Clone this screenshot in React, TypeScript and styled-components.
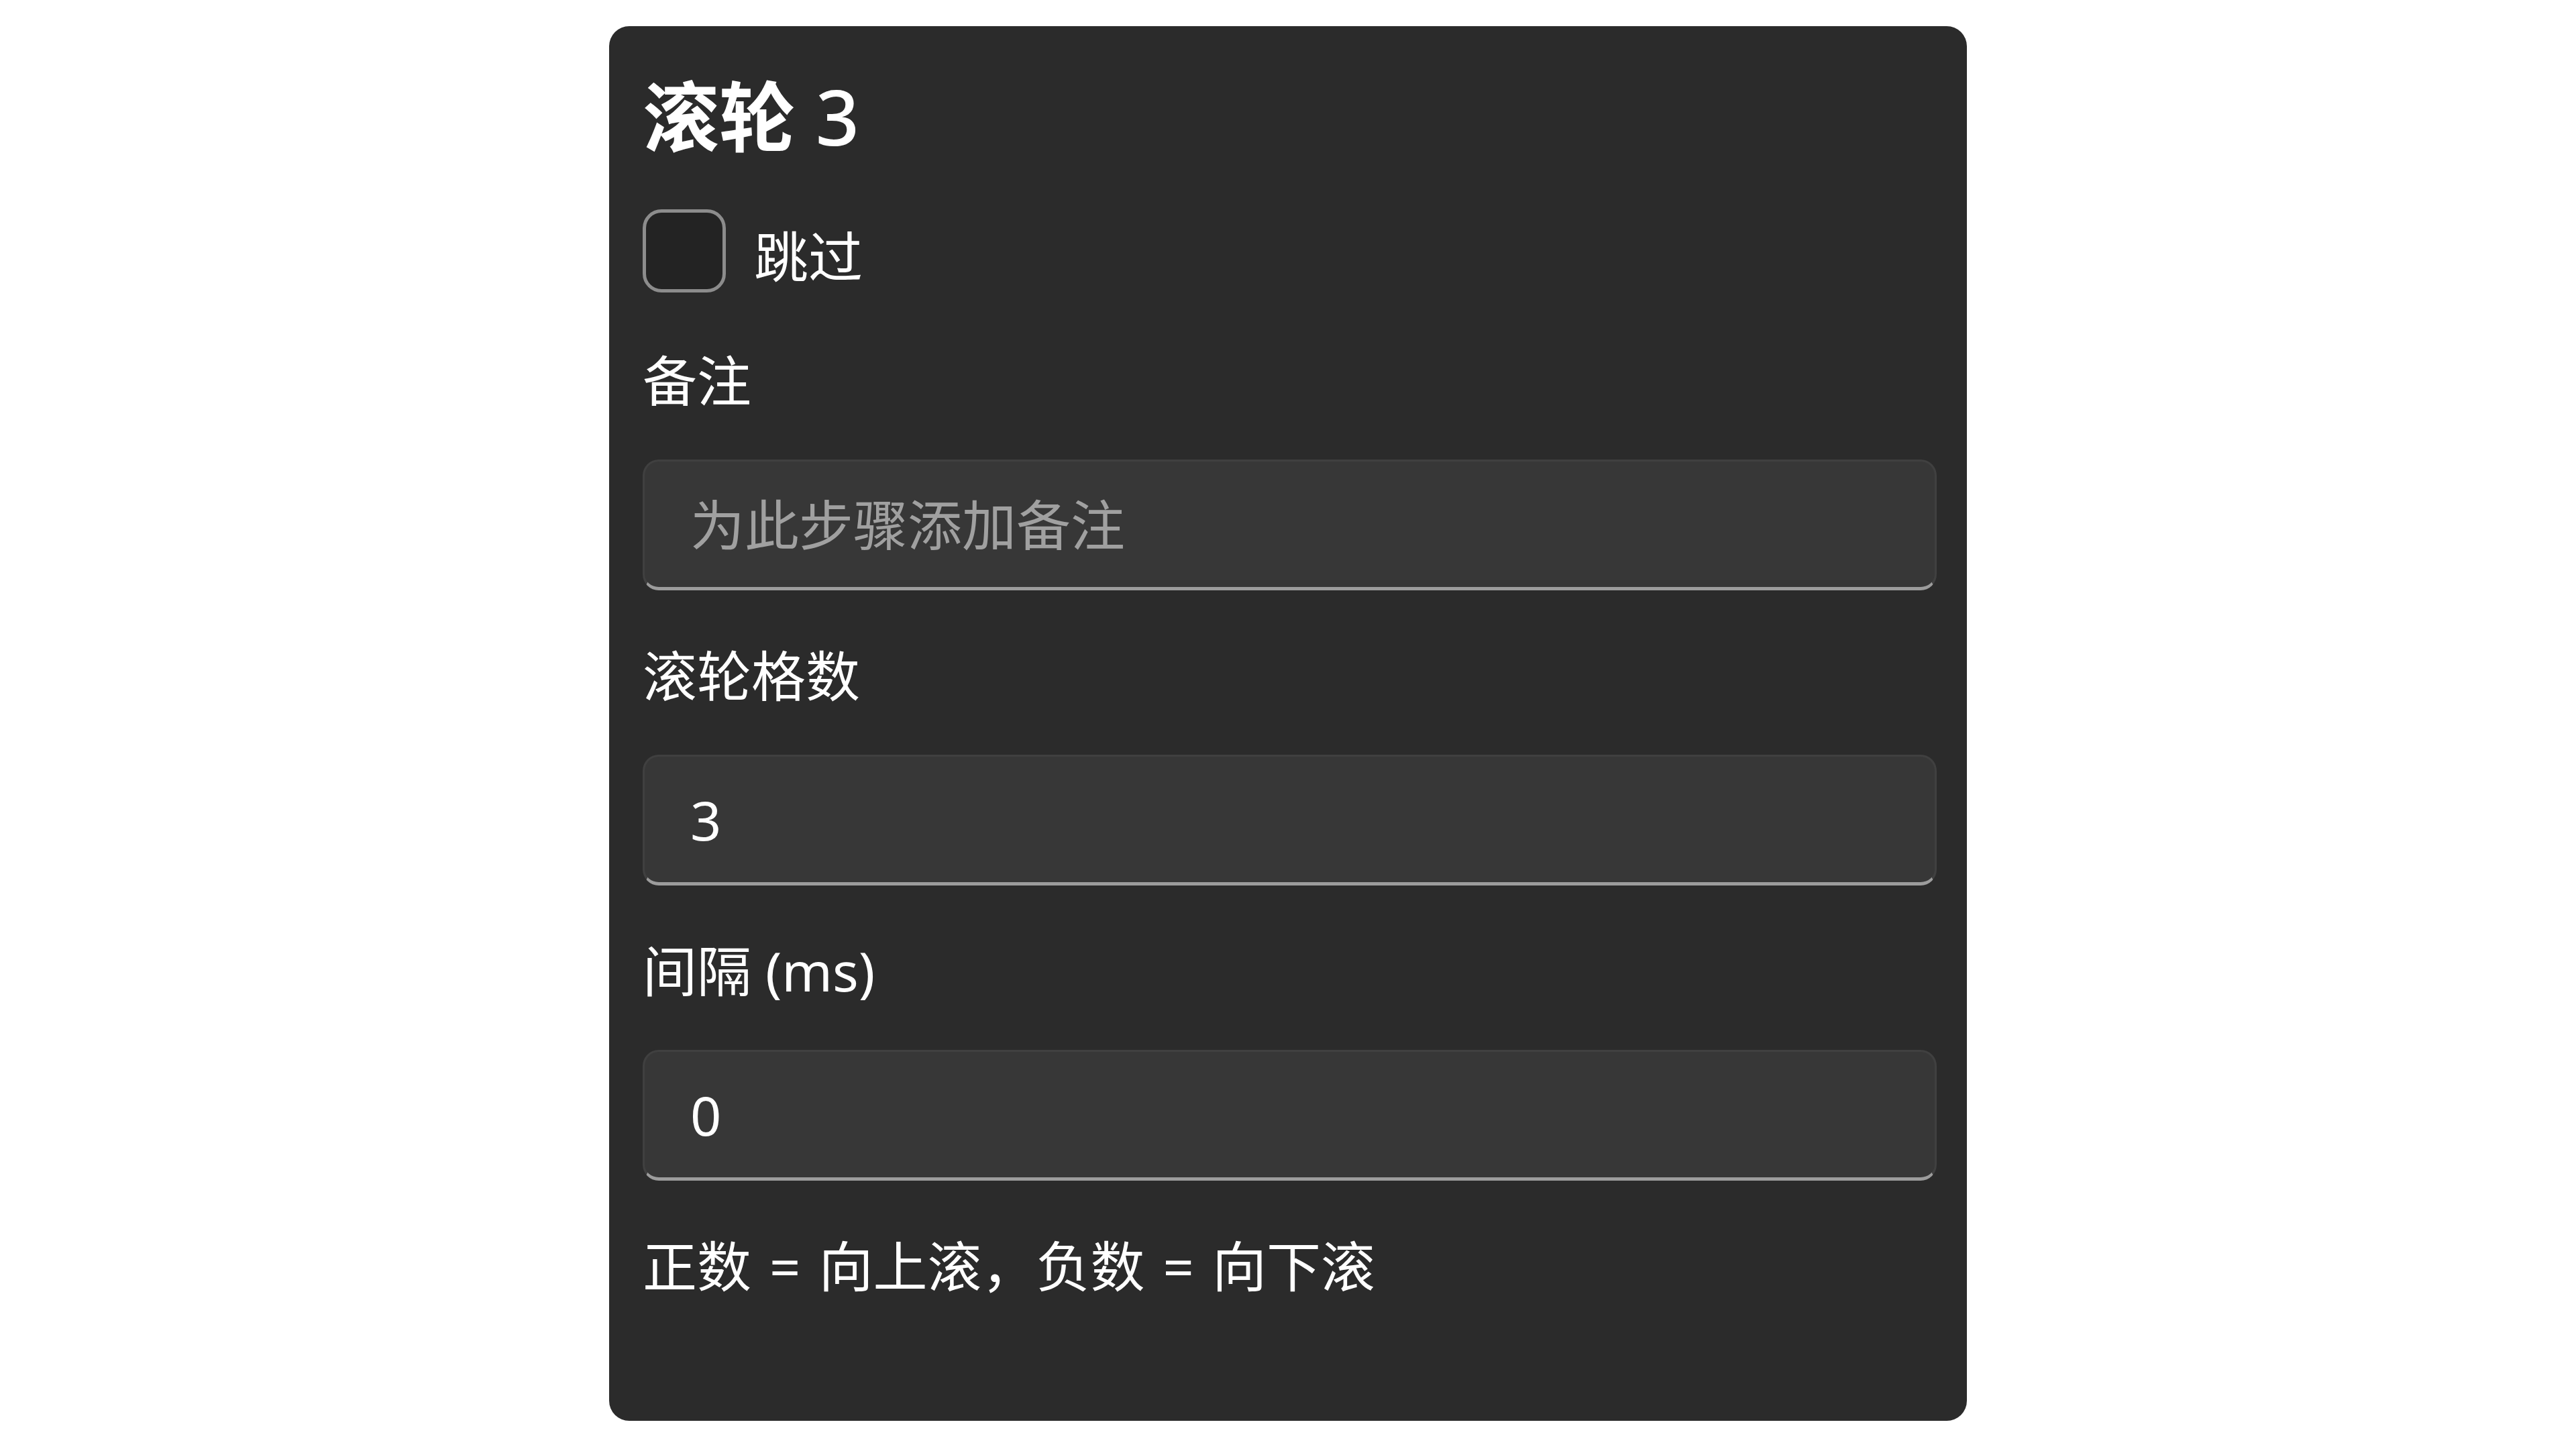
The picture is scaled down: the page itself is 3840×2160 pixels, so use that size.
import React from "react";
import styled, { createGlobalStyle } from "styled-components";

const GlobalStyle = createGlobalStyle`
  html, body {
    margin: 0;
    padding: 0;
    background: #ffffff;
  }
  body {
    font-family: "Noto Sans", "Noto Sans CJK SC", sans-serif;
  }
  * { box-sizing: border-box; }
`;

const Page = styled.div`
  display: flex;
  justify-content: center;
  padding-top: 39px;
  width: 100%;
`;

const Card = styled.section`
  width: 2024px;
  height: 2079px;
  background: #2b2b2b;
  border-radius: 30px;
  padding: 58px 45px 0 50px;
  display: flex;
  flex-direction: column;
  color: #ffffff;
  font-family: "Noto Sans", "Noto Sans CJK SC", sans-serif;
`;

const Title = styled.h1`
  margin: 0 0 64px 0;
  font-size: 114px;
  line-height: 151px;
  font-weight: 700;
  color: #ffffff;
  letter-spacing: 0;
`;

const TitleNumber = styled.span`
  font-weight: 500;
`;

const CheckRow = styled.label`
  display: flex;
  align-items: center;
  gap: 42px;
  margin-bottom: 78px;
`;

const CheckBox = styled.span`
  width: 124px;
  height: 124px;
  border-radius: 28px;
  border: 5px solid #8c8c8c;
  background: #232323;
  flex: none;
`;

const CheckText = styled.span`
  font-size: 81px;
  line-height: 105px;
  padding-top: 14px;
  color: #ffffff;
`;

const Form = styled.div`
  display: flex;
  flex-direction: column;
  gap: 74px;
`;

const Field = styled.div`
  display: flex;
  flex-direction: column;
  gap: 66px;
`;

const Label = styled.div`
  font-size: 81px;
  line-height: 105px;
  color: #ffffff;
`;

const TextBox = styled.input`
  width: 100%;
  height: 195px;
  border-radius: 24px;
  border: 3px solid #404040;
  border-bottom: 5px solid #9c9c9c;
  background: #373737;
  color: #ffffff;
  font-family: "Noto Sans", "Noto Sans CJK SC", sans-serif;
  font-size: 81px;
  padding: 0 68px;
  outline: none;
  &::placeholder {
    color: #a0a0a0;
  }
`;

const Hint = styled.div`
  font-size: 81px;
  line-height: 105px;
  color: #ffffff;
  word-spacing: 6px;
`;

export default function App() {
  return (
    <>
      <GlobalStyle />
      <Page>
        <Card>
          <Title>
            滚轮 <TitleNumber>3</TitleNumber>
          </Title>
          <CheckRow>
            <CheckBox />
            <CheckText>跳过</CheckText>
          </CheckRow>
          <Form>
            <Field>
              <Label>备注</Label>
              <TextBox placeholder="为此步骤添加备注" readOnly />
            </Field>
            <Field>
              <Label>滚轮格数</Label>
              <TextBox defaultValue="3" />
            </Field>
            <Field>
              <Label>间隔 (ms)</Label>
              <TextBox defaultValue="0" />
            </Field>
            <Hint>正数 = 向上滚，负数 = 向下滚</Hint>
          </Form>
        </Card>
      </Page>
    </>
  );
}
